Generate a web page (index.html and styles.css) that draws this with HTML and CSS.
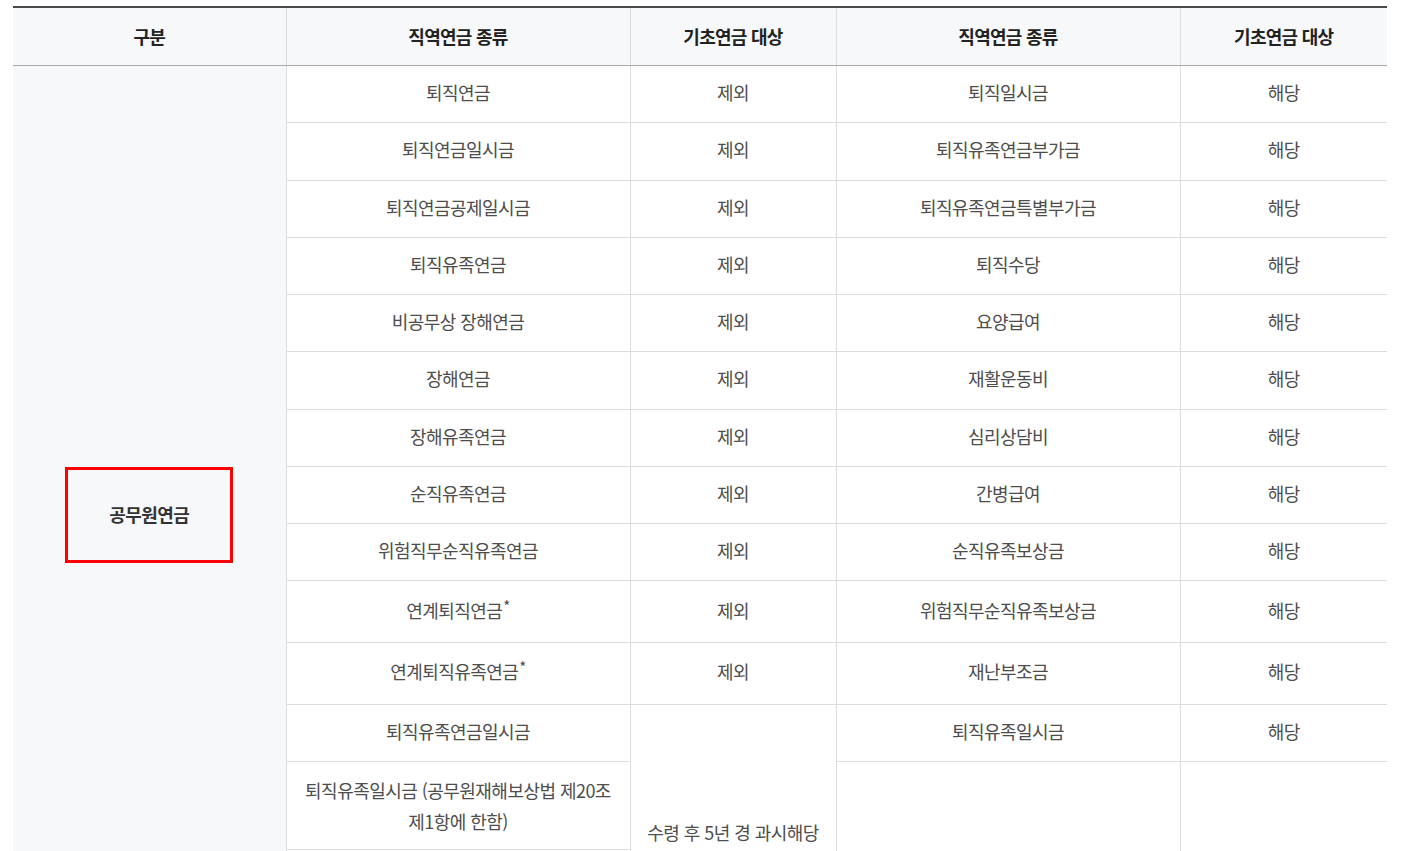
FILE: index.html
```html
<!DOCTYPE html>
<html lang="ko">
<head>
<meta charset="utf-8">
<title>공무원연금</title>
<link rel="stylesheet" href="styles.css">
</head>
<body>
<div class="wrap">
<table class="tbl">
  <colgroup>
    <col class="c1"><col class="c2"><col class="c3"><col class="c4"><col class="c5">
  </colgroup>
  <thead>
    <tr>
      <th>구분</th>
      <th>직역연금 종류</th>
      <th>기초연금 대상</th>
      <th>직역연금 종류</th>
      <th>기초연금 대상</th>
    </tr>
  </thead>
  <tbody>
    <tr>
      <td class="group" rowspan="15"><span class="mark">공무원연금</span></td>
      <td>퇴직연금</td><td>제외</td><td>퇴직일시금</td><td>해당</td>
    </tr>
    <tr><td>퇴직연금일시금</td><td>제외</td><td>퇴직유족연금부가금</td><td>해당</td></tr>
    <tr><td>퇴직연금공제일시금</td><td>제외</td><td>퇴직유족연금특별부가금</td><td>해당</td></tr>
    <tr><td>퇴직유족연금</td><td>제외</td><td>퇴직수당</td><td>해당</td></tr>
    <tr><td>비공무상 장해연금</td><td>제외</td><td>요양급여</td><td>해당</td></tr>
    <tr><td>장해연금</td><td>제외</td><td>재활운동비</td><td>해당</td></tr>
    <tr><td>장해유족연금</td><td>제외</td><td>심리상담비</td><td>해당</td></tr>
    <tr><td>순직유족연금</td><td>제외</td><td>간병급여</td><td>해당</td></tr>
    <tr><td>위험직무순직유족연금</td><td>제외</td><td>순직유족보상금</td><td>해당</td></tr>
    <tr class="tall"><td>연계퇴직연금<sup>*</sup></td><td>제외</td><td>위험직무순직유족보상금</td><td>해당</td></tr>
    <tr class="tall"><td>연계퇴직유족연금<sup>*</sup></td><td>제외</td><td>재난부조금</td><td>해당</td></tr>
    <tr>
      <td>퇴직유족연금일시금</td>
      <td rowspan="4">수령 후 5년 경 과시해당</td>
      <td>퇴직유족일시금</td><td>해당</td>
    </tr>
    <tr>
      <td class="multi">퇴직유족일시금 (공무원재해보상법 제20조<br>제1항에 한함)</td>
      <td rowspan="3"></td><td rowspan="3"></td>
    </tr>
    <tr><td class="blank"></td></tr>
    <tr><td class="blank"></td></tr>
  </tbody>
</table>
</div>
</body>
</html>
```

FILE: styles.css
```css
html, body {
  margin: 0;
  padding: 0;
  background: #fff;
}
body {
  font-family: "Noto Sans CJK KR", "Noto Sans", sans-serif;
}
.wrap {
  padding: 6px 0 0 13px;
}
.tbl {
  width: 1374px;
  border-collapse: collapse;
  table-layout: fixed;
  border-top: 2px solid #4a4a4a;
}
.c1 { width: 273px; }
.c2 { width: 344px; }
.c3 { width: 206px; }
.c4 { width: 344px; }
.c5 { width: 207px; }

.tbl th {
  height: 55px;
  padding: 0 10px 2px;
  background: #f7f8fa;
  color: #222;
  font-size: 18px;
  font-weight: 700;
  letter-spacing: -0.04em;
  text-align: center;
  vertical-align: middle;
  border-left: 1px solid #ddd;
  border-bottom: 1px solid #aaa;
}
.tbl th:first-child { border-left: 0; }

.tbl td {
  padding: 11px 10px 14.25px;
  color: #4d4d4d;
  font-size: 18px;
  line-height: 31px;
  letter-spacing: -0.03em;
  text-align: center;
  vertical-align: middle;
  border-left: 1px solid #ddd;
  border-bottom: 1px solid #ddd;
}
.tbl td.multi { padding: 13px 10px 12px; }
.tbl td.blank { height: 31px; }
.tbl tr.tall td { height: 35.5px; }
.tbl td.group {
  border-left: 0;
  background: #f7f8fa;
  color: #333;
  font-weight: 700;
  font-size: 18px;
  padding: 0 10px;
}
.tbl sup {
  font-size: 15px;
  line-height: 0;
  vertical-align: 6px;
  margin-left: 1px;
}
.mark {
  display: inline-flex;
  align-items: center;
  justify-content: center;
  width: 168px;
  height: 96px;
  box-sizing: border-box;
  border: 3px solid #f00;
}
```
